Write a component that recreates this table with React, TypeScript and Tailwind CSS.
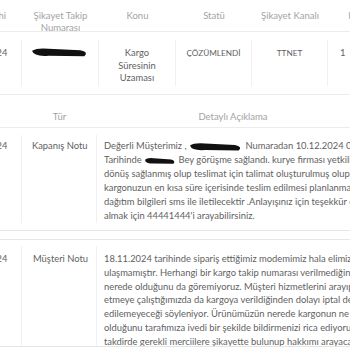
import React from 'react';

const font = { fontFamily: '"Lato", "Open Sans", sans-serif' };

function Blob({ w, h }: { w: number; h: number }) {
  // redaction scribble
  return (
    <svg width={w} height={h} viewBox={`0 0 ${w} ${h}`} className="inline-block align-middle">
      <path
        d={`M1 ${h * 0.35} Q${w * 0.1} ${h * 0.05} ${w * 0.3} ${h * 0.15} L${w * 0.85} ${h * 0.3} Q${w} ${h * 0.45} ${w * 0.92} ${h * 0.85} L${w * 0.3} ${h * 0.8} Q${w * 0.05} ${h * 0.9} 1 ${h * 0.35} Z`}
        fill="#111"
      />
    </svg>
  );
}

const topHeaders = ['Şikayet Tarihi', 'Şikayet Takip Numarası', 'Konu', 'Statü', 'Şikayet Kanalı', 'Kayıt No'];

const row1 = [
  <>Değerli Müşterimiz , <Blob w={54} h={10} /> Numaradan 10.12.2024 09:32</>,
  <>Tarihinde <Blob w={32} h={8} /> Bey görüşme sağlandı. kurye firması yetkilisi ile</>,
  <>dönüş sağlanmış olup teslimat için talimat oluşturulmuş olup</>,
  <>kargonuzun en kısa süre içerisinde teslim edilmesi planlanmaktadır.</>,
  <>dağıtım bilgileri sms ile iletilecektir .Anlayışınız için teşekkür ederiz. Bilgi</>,
  <>almak için 44441444'i arayabilirsiniz.</>,
];

const row2 = [
  '18.11.2024 tarihinde sipariş ettiğimiz modemimiz hala elimize',
  'ulaşmamıştır. Herhangi bir kargo takip numarası verilmediğinden',
  'nerede olduğunu da göremiyoruz. Müşteri hizmetlerini arayıp iptal',
  'etmeye çalıştığımızda da kargoya verildiğinden dolayı iptal de',
  'edilemeyeceği söyleniyor. Ürünümüzün nerede kargonun ne aşamada',
  'olduğunu tarafımıza ivedi bir şekilde bildirmenizi rica ediyorum.',
  'takdirde gerekli merciilere şikayette bulunup hakkımı arayacağım',
];

export default function App() {
  return (
    <div className="w-[350px] h-[350px] overflow-hidden bg-white" style={font}>
      <div className="-ml-[54px] w-[460px]">
        {/* complaint summary table */}
        <div className="grid grid-cols-[76px_77px_77px_76px_76px_77px] border-b border-[#ececec] h-[32px] pt-[10px] text-[9.5px] leading-[11.5px] text-[#a3a3a3]">
          {topHeaders.map((h, i) => (
            <div key={i} className={i === 0 ? 'whitespace-nowrap text-right pr-[16px]' : 'text-center px-2'}>
              {h}
            </div>
          ))}
        </div>
        <div className="grid grid-cols-[76px_77px_77px_76px_76px_77px] border-b border-[#ececec] h-[63px] py-[8px] text-[9.4px] leading-[12.5px] text-[#5f5f5f]">
          <div className="border-r border-[#f0f0f0] text-center pt-[7px]">10.12.2024</div>
          <div className="border-r border-[#f0f0f0] flex justify-center pt-[7px]">
            <Blob w={58} h={11} />
          </div>
          <div className="border-r border-[#f0f0f0] text-center pt-[7px] px-[17px]">Kargo Süresinin Uzaması</div>
          <div className="border-r border-[#f0f0f0] text-center pt-[7px] text-[8.2px]">ÇÖZÜMLENDİ</div>
          <div className="border-r border-[#f0f0f0] text-center pt-[7px] text-[8.2px]">TTNET</div>
          <div className="text-left pl-[12px] pt-[7px]">1</div>
        </div>

        {/* detail notes table */}
        <div className="grid grid-cols-[76px_75px_272px] mt-[15px] border-b border-[#ececec] h-[18px] pt-[1px] text-[9.5px] leading-[11.5px] text-[#a3a3a3]">
          <div className="text-center">Tarih</div>
          <div className="text-center">Tür</div>
          <div className="text-center">Detaylı Açıklama</div>
        </div>
        <div className="grid grid-cols-[76px_75px_272px] border-b border-[#e6e6e6] py-[7px] text-[9.4px] leading-[14px] text-[#5f5f5f]">
          <div className="border-r border-[#f0f0f0] text-center pt-[4px]">10.12.2024</div>
          <div className="border-r border-[#f0f0f0] pl-[10px] pt-[4px]">Kapanış Notu</div>
          <div className="pl-[7px] pt-[4px] whitespace-nowrap">
            {row1.map((l, i) => (
              <div key={i}>{l}</div>
            ))}
          </div>
        </div>
        <div className="mt-[8px] border-t border-[#e6e6e6] h-[108px] overflow-hidden border-b">
          <div className="grid grid-cols-[76px_75px_272px] h-[106px] pt-[6px] text-[9.4px] leading-[13.8px] text-[#5f5f5f]">
            <div className="border-r border-[#f0f0f0] text-center pt-[6px]">18.11.2024</div>
            <div className="border-r border-[#f0f0f0] pl-[11px] pt-[6px]">Müşteri Notu</div>
            <div className="pl-[7px] pt-[6px] whitespace-nowrap">
              {row2.map((l, i) => (
                <div key={i}>{l}</div>
              ))}
            </div>
          </div>
        </div>
      </div>
    </div>
  );
}
